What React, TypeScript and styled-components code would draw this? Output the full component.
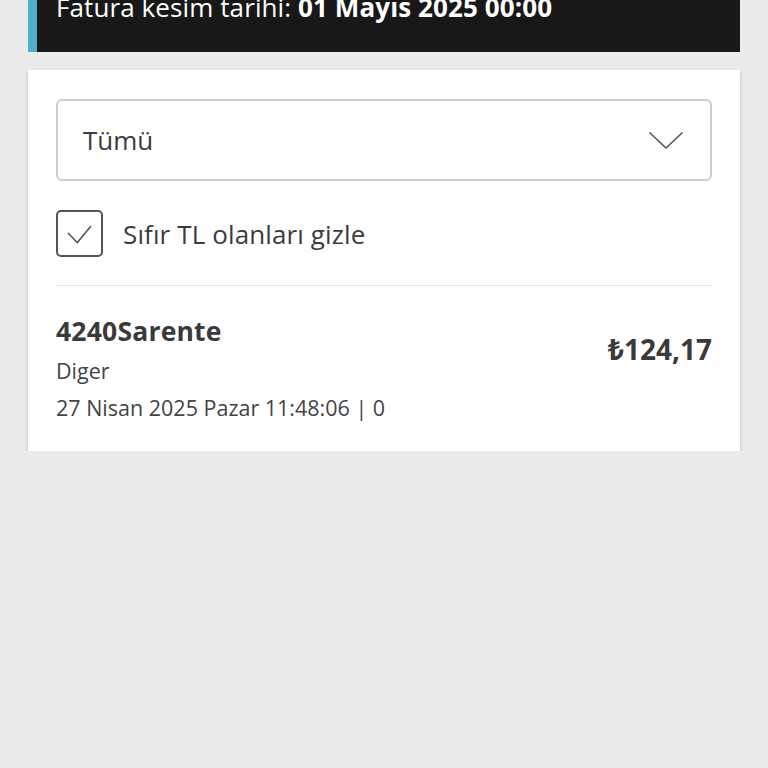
import React from "react";
import styled, { createGlobalStyle } from "styled-components";

const Global = createGlobalStyle`
  html, body { margin: 0; padding: 0; background: #ebebeb; }
  body { font-family: "Open Sans", "Noto Sans", sans-serif; color: #333; }
`;

const Page = styled.div`
  padding: 0 28px;
  display: flex;
  flex-direction: column;
  gap: 18px;
`;

const Header = styled.div`
  height: 52px;
  box-sizing: border-box;
  background: #181818;
  border-left: 9px solid #4cb0cb;
  display: flex;
  align-items: flex-end;
  padding: 0 0 29px 19px;
  color: #fff;
  font-size: 26px;
  line-height: 32px;
  letter-spacing: 0.1px;
  white-space: nowrap;
`;

const Strong = styled.strong`
  font-weight: 700;
`;

const Card = styled.div`
  background: #fff;
  box-shadow: 0 2px 4px rgba(0, 0, 0, 0.22);
`;

const Filters = styled.div`
  margin: 0 28px;
  padding: 29px 0 28px;
  display: flex;
  flex-direction: column;
  gap: 29px;
  border-bottom: 1.5px solid #e8e8e8;
`;

const Select = styled.div`
  height: 82px;
  box-sizing: border-box;
  border: 2px solid #cdcdcd;
  border-radius: 6px;
  display: flex;
  align-items: center;
  justify-content: space-between;
  padding: 0 26px 0 25px;
  font-size: 26px;
  color: #3c3c3c;
`;

const CheckRow = styled.label`
  display: flex;
  align-items: center;
  gap: 20px;
  font-size: 26px;
  letter-spacing: 0.12px;
  color: #3c3c3c;
`;

const Box = styled.span`
  width: 47px;
  height: 47px;
  box-sizing: border-box;
  border: 2px solid #555;
  border-radius: 5px;
  display: flex;
  align-items: center;
  justify-content: center;
  overflow: hidden;
`;

const Item = styled.div`
  padding: 29px 28px 28px;
  display: flex;
  justify-content: space-between;
  align-items: flex-start;
`;

const Info = styled.div`
  display: flex;
  flex-direction: column;
`;

const Title = styled.div`
  font-size: 26.5px;
  line-height: 32px;
  font-weight: 700;
  color: #3a3a3a;
  letter-spacing: 0.2px;
  margin-bottom: 9px;
`;

const Sub = styled.div<{ $mb?: number }>`
  font-size: 21.5px;
  line-height: 30px;
  color: #444;
  margin-bottom: ${(p) => p.$mb ?? 0}px;
`;

const Amount = styled.div`
  font-size: 28px;
  line-height: 34px;
  font-weight: 700;
  color: #3a3a3a;
  margin-top: 17px;
`;

export default function App() {
  return (
    <>
      <Global />
      <Page>
        <Header>
          Fatura kesim tarihi:&nbsp;<Strong>01 Mayıs 2025 00:00</Strong>
        </Header>
        <Card>
          <Filters>
            <Select>
              <span>Tümü</span>
              <svg width="36" height="19" viewBox="0 0 36 19">
                <polyline points="1.5,1.5 18,17 34.5,1.5" fill="none" stroke="#555" strokeWidth="1.6" />
              </svg>
            </Select>
            <CheckRow>
              <Box>
                <svg width="43" height="43" viewBox="2 2 43 43">
                  <polyline points="12,23 21.3,32.5 35,16" fill="none" stroke="#555" strokeWidth="1.6" />
                </svg>
              </Box>
              Sıfır TL olanları gizle
            </CheckRow>
          </Filters>
          <Item>
            <Info>
              <Title>4240Sarente</Title>
              <Sub $mb={7}>Diger</Sub>
              <Sub>27 Nisan 2025 Pazar 11:48:06 | 0</Sub>
            </Info>
            <Amount>₺124,17</Amount>
          </Item>
        </Card>
      </Page>
    </>
  );
}
